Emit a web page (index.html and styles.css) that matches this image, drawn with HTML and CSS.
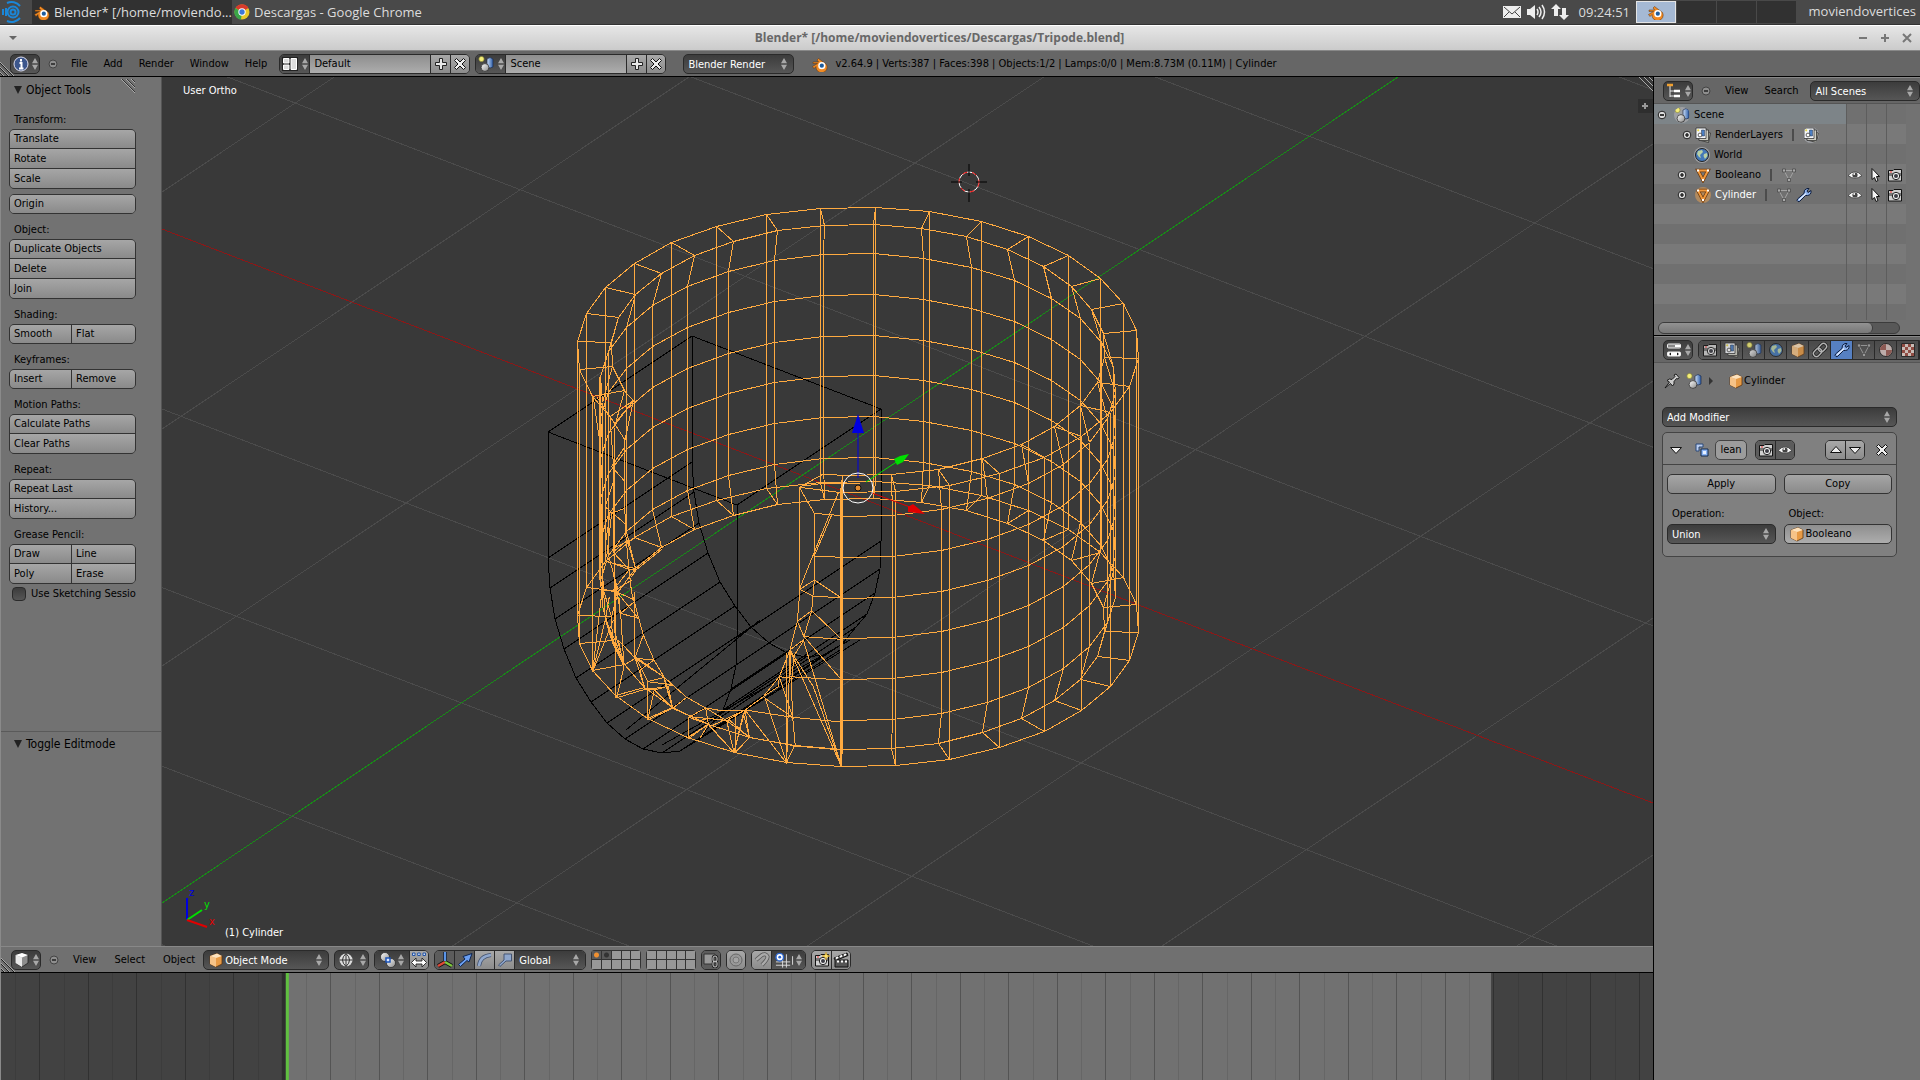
FILE: index.html
```html
<!DOCTYPE html>
<html lang="en">
<head>
<meta charset="utf-8">
<title>Blender* [/home/moviendovertices/Descargas/Tripode.blend]</title>
<link rel="stylesheet" href="styles.css">
</head>
<body>
<svg class="sprite" aria-hidden="true">
  <defs>
    <linearGradient id="ball" x1="0" y1="0" x2="1" y2="1"><stop offset="0" stop-color="#fff"/><stop offset="1" stop-color="#888"/></linearGradient>
    <linearGradient id="blueg" x1="0" y1="0" x2="1" y2="0"><stop offset="0" stop-color="#cfe0f7"/><stop offset="1" stop-color="#2b5ca8"/></linearGradient>
  </defs>
  <symbol id="arrows" viewBox="0 0 7 14"><path d="M0 6L3.500 0L7 6zM0 8L3.500 14L7 8z" fill="#a8a8a8"/></symbol>
  <symbol id="minus" viewBox="0 0 10 10"><circle cx="5" cy="5" r="4" fill="#8e8e8e" stroke="#444"/><path d="M3 5H7" stroke="#222" stroke-width="1.500"/></symbol>
  <symbol id="expand" viewBox="0 0 10 10"><circle cx="5" cy="5" r="3.800" fill="#ddd" stroke="#222"/><path d="M3 5H7M5 3V7" stroke="#000" stroke-width="1.200"/></symbol>
  <symbol id="collapse" viewBox="0 0 10 10"><circle cx="5" cy="5" r="3.800" fill="#ddd" stroke="#222"/><path d="M3 5H7" stroke="#000" stroke-width="1.500"/></symbol>
  <symbol id="blender" viewBox="0 0 16 16"><path d="M1 6H6.500L5 4L6.500 2.500L14.500 8.500A5.600 5.600 0 1 1 4 10.500L2 12.500L.5 10.500L5.500 7.500H1z" fill="#f08a24" stroke="#5a300c" stroke-width=".5"/><circle cx="9.800" cy="9.700" r="3.600" fill="#fff"/><circle cx="9.800" cy="9.700" r="2.100" fill="#1d5c9e"/></symbol>
  <symbol id="info" viewBox="0 0 16 16"><circle cx="8" cy="8" r="7" fill="#3c568c" stroke="#dde"/><path d="M8 3V5.500M6.500 7H8.500V12M6 12.500H10.500" stroke="#fff" stroke-width="2" fill="none"/></symbol>
  <symbol id="layout" viewBox="0 0 16 16"><path d="M0 1H16V15H0z" fill="#222"/><path d="M1.500 2.500H7V7H1.500zM1.500 9H7V13.500H1.500zM9 2.500H14.500V13.500H9z" fill="#ddd" stroke="#fff"/></symbol>
  <symbol id="scene" viewBox="0 0 16 16"><path d="M9 3Q12 0 15 3V11Q12 13 9 11z" fill="url(#blueg)" stroke="#1c2c4c" stroke-width=".7"/><circle cx="7" cy="11.500" r="3.900" fill="url(#ball)" stroke="#222" stroke-width=".7"/><circle cx="3.500" cy="3" r="2.600" fill="#f4ee7a" stroke="#8b8838" stroke-width=".7"/></symbol>
  <symbol id="plus" viewBox="0 0 16 16"><path d="M6.500 2.500H9.500V6.500H13.500V9.500H9.500V13.500H6.500V9.500H2.500V6.500H6.500z" fill="#e8e8e8" stroke="#222"/></symbol>
  <symbol id="cross" viewBox="0 0 16 16"><path d="M2.500 4.500L4.500 2.500L8 6L11.500 2.500L13.500 4.500L10 8L13.500 11.500L11.500 13.500L8 10L4.500 13.500L2.500 11.500L6 8z" fill="#eee" stroke="#111"/></symbol>
  <symbol id="cubeo" viewBox="0 0 16 16"><path d="M2 4L9 1.500L14 4V12L8 15L2 12z" fill="#e79a45" stroke="#5d3510" stroke-width=".8"/><path d="M2 4L8 6V15L2 12z" fill="#f6c388"/><path d="M2 4L9 1.500L14 4L8 6z" fill="#fde2bd"/></symbol>
  <symbol id="cubew" viewBox="0 0 16 16"><path d="M1.500 3L8 1L14 3V11L8 15L1.500 11z" fill="#8d8d8d" stroke="#222" stroke-width=".8"/><path d="M1.500 3L8 5.500V15L1.500 11z" fill="#e8e8e8"/><path d="M1.500 3L8 1L14 3L8 5.500z" fill="#fff"/></symbol>
  <symbol id="tree" viewBox="0 0 16 16"><path d="M4 3V14M4 8H9M4 13H9" stroke="#e8e8e8" fill="none"/><path d="M1 2H7" stroke="#f0a030" stroke-width="2.500"/><path d="M8 8H14M8 13H14" stroke="#fff" stroke-width="2.500"/></symbol>
  <symbol id="sliders" viewBox="0 0 16 16"><rect x="1.500" y="2" width="13" height="4" rx="1" fill="#888" stroke="#eee"/><path d="M9 3H14V5H9z" fill="#fff"/><rect x="1.500" y="10" width="13" height="4" rx="1" fill="#fff" stroke="#eee"/><path d="M3 12L5 10.500V13.500zM13 12L11 10.500V13.500z" fill="#111"/></symbol>
  <symbol id="layers" viewBox="0 0 16 16"><path d="M6 4L15.500 6L13.500 15.500L4 13z" fill="#a8a89a" stroke="#333" stroke-width=".8"/><path d="M4 3H13.500V13.500H4z" fill="#cfcfc4" stroke="#333" stroke-width=".8"/><path d="M1 1H11V11.500H1z" fill="#f4f6fa" stroke="#333" stroke-width=".8"/><path d="M6.500 3H9.500V9H6.500z" fill="#4b7fc4" stroke="#234" stroke-width=".5"/><circle cx="5" cy="8" r="1.900" fill="#fff" stroke="#222" stroke-width=".7"/><circle cx="3.200" cy="3.300" r="1.100" fill="#e8d848"/></symbol>
  <symbol id="world" viewBox="0 0 16 16"><circle cx="8" cy="8" r="6.500" fill="#4478b8" stroke="#222"/><path d="M4 4L8 3L9 5L6 8L7 11L5 10L3 7zM10 7L13 6L13.500 9L11 12L9.500 9z" fill="#b9d0a4"/></symbol>
  <symbol id="mesho" viewBox="0 0 16 16"><path d="M3 3.500H13L8 13z" fill="none" stroke="#6a3a10" stroke-width="3.500"/><path d="M3 3.500H13L8 13z" fill="none" stroke="#f29a3e" stroke-width="2"/><path d="M2 2.500H4V4.500H2zM12 2.500H14V4.500H12zM7 12H9V14H7z" fill="#fff"/></symbol>
  <symbol id="meshg" viewBox="0 0 16 16"><path d="M3 3.500H13L8 13z" fill="none" stroke="#a4a4a4"/><path d="M1.500 2H4.500V5H1.500zM11.500 2H14.500V5H11.500zM6.500 11.500H9.500V14.500H6.500z" fill="#aaa" stroke="#444" stroke-width=".7"/></symbol>
  <symbol id="wrench" viewBox="0 0 16 16"><path d="M2 14.500Q.5 14 1.500 12L8 6.500Q7.500 2.500 11 1.500L13 1.500L11 4L12 5.500L15 3.500Q15.500 8 11.500 8.500H9.500L4 14Q3 15 2 14.500z" fill="#8fb2ec" stroke="#0d1c3c"/><path d="M3 13L10 6.500" stroke="#e4eeff" stroke-width="1.200"/></symbol>
  <symbol id="eye" viewBox="0 0 16 16"><path d="M1 8.500Q8 1 15 8.500Q8 14 1 8.500z" fill="#f4f4f4" stroke="#333" stroke-width=".8"/><circle cx="8" cy="8" r="2.600" fill="#444"/><circle cx="7.200" cy="7" r=".9" fill="#fff"/></symbol>
  <symbol id="pointer" viewBox="0 0 16 16"><path d="M5 1.500V12.500L7.500 10.500L9 14.500L11 13.500L9.500 9.500H12.500z" fill="#f4f4f4" stroke="#111"/></symbol>
  <symbol id="camera" viewBox="0 0 16 16"><path d="M1.500 3.500H6L7 2.500H14.500V14H1.500z" fill="#d0d0d0" stroke="#111"/><path d="M2 6H14V9H2z" fill="#777"/><circle cx="9" cy="9" r="3.700" fill="#eee" stroke="#222"/><circle cx="9" cy="9" r="2" fill="#3c3c44"/><path d="M3 5H5" stroke="#e33"/></symbol>
  <symbol id="chain" viewBox="0 0 16 16"><g transform="rotate(-45 8 8)" fill="none"><rect x="0" y="5" width="9" height="6" rx="3" stroke="#111" stroke-width="3"/><rect x="7" y="5" width="9" height="6" rx="3" stroke="#111" stroke-width="3"/><rect x="0" y="5" width="9" height="6" rx="3" stroke="#ccc" stroke-width="1.500"/><rect x="7" y="5" width="9" height="6" rx="3" stroke="#ccc" stroke-width="1.500"/></g></symbol>
  <symbol id="material" viewBox="0 0 16 16"><circle cx="8" cy="8" r="6.500" fill="#d8c4c0" stroke="#222"/><path d="M8 8H14A6 6 0 0 1 8 14zM8 8H2A6 6 0 0 1 8 2z" fill="#9c5c54"/></symbol>
  <symbol id="texture" viewBox="0 0 16 16"><path d="M1.500 1.500H14.500V14.500H1.500z" fill="#e8d8d0" stroke="#222"/><path d="M2 2h3v3h-3zM8 2h3v3h-3zM5 5h3v3h-3zM11 5h3v3h-3zM2 8h3v3h-3zM8 8h3v3h-3zM5 11h3v3h-3zM11 11h3v3h-3z" fill="#a04c40"/></symbol>
  <symbol id="pin" viewBox="0 0 16 16"><path d="M1 15L5.500 9L3 7.500L5.500 6L8 6.500L11 3.500L10 2L12 1L15 4.500L14 6L12.500 5.500L10 8.500L10 11L8.500 13L6.500 10.500z" fill="#ccc" stroke="#111" stroke-width=".9"/></symbol>
  <symbol id="boolean" viewBox="0 0 16 16"><path d="M2 2H9V5H5V9H2z" fill="#b9cdf0" stroke="#2a4878"/><path d="M7 7H14V14H7z" fill="#8ab4f4" stroke="#10284c"/><path d="M9 9H12V12H9z" fill="#e6f0ff"/></symbol>
  <symbol id="tridown" viewBox="0 0 16 16"><path d="M2.500 5.500H13.500L8 11.500z" fill="#eee" stroke="#111"/></symbol>
  <symbol id="triup" viewBox="0 0 16 16"><path d="M2.500 10.500H13.500L8 4.500z" fill="#eee" stroke="#111"/></symbol>
  <symbol id="wireball" viewBox="0 0 16 16"><circle cx="8" cy="8" r="6.500" fill="#ddd"/><path d="M8 1.500V14.500M1.500 8H14.500M8 1.500Q1 8 8 14.500M8 1.500Q15 8 8 14.500" stroke="#333" fill="none"/></symbol>
  <symbol id="pivot" viewBox="0 0 16 16"><circle cx="5" cy="5" r="4.500" fill="url(#ball)" stroke="#111" stroke-width=".6"/><circle cx="11" cy="11" r="4.500" fill="url(#ball)" stroke="#111" stroke-width=".6"/><path d="M6 6H10V10H6z" fill="#dfe9ff" stroke="#1d54b8" stroke-width="1.500"/></symbol>
  <symbol id="centers" viewBox="0 0 16 16"><path d="M1.500 1H4V3.500H1.500zM6.700 1H9.200V3.500H6.700zM12 1H14.500V3.500H12z" fill="#cfe0ff" stroke="#2454a4"/><path d="M.5 10.500L5 6V9H11V6L15.500 10.500L11 15V12H5V15z" fill="#fff" stroke="#222" stroke-width=".9"/></symbol>
  <symbol id="axes" viewBox="0 0 16 16"><path d="M8 0V10L1 14M8 10L15 14" fill="none" stroke="#111" stroke-width="4"/><path d="M8 0V9" stroke="#5b95e8" stroke-width="2.500"/><path d="M8 10L1 14" stroke="#e04838" stroke-width="2.500"/><path d="M8 10L15 14" stroke="#7cc83c" stroke-width="2.500"/></symbol>
  <symbol id="move" viewBox="0 0 16 16"><path d="M1.500 12.500L8 7L6 4.500L15 1.500L12 10L10 8.500L3.500 14.500z" fill="#6a9ef0" stroke="#0d2450"/></symbol>
  <symbol id="rotate" viewBox="0 0 16 16"><path d="M2 14Q3 4 14 3" fill="none" stroke="#445472" stroke-width="4"/><path d="M2 14Q3 4 14 3" fill="none" stroke="#91a8cc" stroke-width="2.500"/></symbol>
  <symbol id="scale" viewBox="0 0 16 16"><path d="M1.500 13L7 8V2H14.500V9H9L3 14.500z" fill="#8ea6cc" stroke="#445472"/></symbol>
  <symbol id="lock" viewBox="0 0 16 16"><path d="M1 2H12V12H1z" fill="#999" stroke="#333"/><rect x="10" y="4" width="4" height="6" rx="2" fill="none" stroke="#222" stroke-width="2.500"/><rect x="10" y="9" width="4" height="6" rx="2" fill="none" stroke="#222" stroke-width="2.500"/><rect x="10" y="4" width="4" height="6" rx="2" fill="none" stroke="#ccc"/><rect x="10" y="9" width="4" height="6" rx="2" fill="none" stroke="#ccc"/></symbol>
  <symbol id="prop" viewBox="0 0 16 16"><circle cx="8" cy="8" r="6" fill="#999" stroke="#666"/><circle cx="8" cy="8" r="3" fill="#a4a4a4" stroke="#777"/></symbol>
  <symbol id="magnet" viewBox="0 0 16 16"><path d="M2 8L8 3Q12 1 13.500 4.500Q14 7 8 13" fill="none" stroke="#555" stroke-width="4"/><path d="M2 8L8 3Q12 1 13.500 4.500Q14 7 8 13" fill="none" stroke="#aaa" stroke-width="2.500"/></symbol>
  <symbol id="snap" viewBox="0 0 20 16"><path d="M1 10H16M1 13.500H16M8 4V16M12 2V16M18.500 4V13" stroke="#ddd" fill="none"/><circle cx="5" cy="5" r="4" fill="#fff" stroke="#2a64cc" stroke-width="1.500"/><circle cx="5" cy="5" r="1.500" fill="#2a64cc"/></symbol>
  <symbol id="clap" viewBox="0 0 16 16"><path d="M1 6L14 1L15 3.500L4 8H15V15H2V8z" fill="#555" stroke="#111"/><path d="M3 6.500L5 5M7 5L9 3.500M11 3.500L13 2M4 9.500H6M8 9.500H10M12 9.500H14" stroke="#fff" stroke-width="2"/></symbol>
  <symbol id="camstar" viewBox="0 0 16 16"><use href="#camera"/><path d="M12 0L13 3L16 4L13 5L12 8L11 5L8 4L11 3z" fill="#ffe56a" stroke="#c79018" stroke-width=".5"/></symbol>
  <symbol id="grip" viewBox="0 0 14 14"><path d="M0 0L14 14M5 0L14 9M10 0L14 4" stroke="#a8a8a8" fill="none"/><path d="M1 0L14 13M6 0L14 8M11 0L14 3" stroke="#333" fill="none"/></symbol>
  <symbol id="grip-low" viewBox="0 0 14 14"><path d="M0 0L14 14M0 5L9 14M0 10L4 14" stroke="#a8a8a8" fill="none"/><path d="M0 1L13 14M0 6L8 14M0 11L3 14" stroke="#222" fill="none"/></symbol>
</svg>

<div class="desktop-bar">
  <button class="launcher" aria-label="Menu"><svg viewBox="0 0 20 22"><g fill="none" stroke="#1b87d8" stroke-width="2"><circle cx="11" cy="11" r="2.500"/><circle cx="11" cy="11" r="5.500"/><path d="M5 2A11 11 0 0 1 18 5M5 20A11 11 0 0 0 18 17M1 8V14M4 7V15"/></g></svg></button>
  <button class="task task-active"><svg class="ic"><use href="#blender"/></svg><span>Blender* [/home/moviendo...</span></button>
  <button class="task"><svg class="ic" viewBox="0 0 16 16"><circle cx="8" cy="8" r="7.500" fill="#e8c828"/><path d="M8 8L1.500 4A7.500 7.500 0 0 1 14.500 4z" fill="#d83a2c"/><path d="M8 8L1.500 4A7.500 7.500 0 0 0 7 15.500z" fill="#3aa648"/><circle cx="8" cy="8" r="3.700" fill="#fff"/><circle cx="8" cy="8" r="2.700" fill="#3c78d8"/></svg><span>Descargas - Google Chrome</span></button>
  <div class="tray">
    <svg class="tray-ic" viewBox="0 0 20 16"><path d="M1 2H19V14H1z" fill="#eee"/><path d="M2 3L10 10L18 3M2 13L7 8M18 13L13 8" fill="none" stroke="#444"/></svg>
    <svg class="tray-ic" viewBox="0 0 20 16"><path d="M1 5H4L9 1V15L4 11H1z" fill="#eee"/><path d="M11 5Q13 8 11 11M13 3Q17 8 13 13M16 1Q21 8 16 15" fill="none" stroke="#eee" stroke-width="1.500"/></svg>
    <svg class="tray-ic" viewBox="0 0 20 16"><path d="M6 0L11 5H8V12H4V5H1zM14 16L9 11H12V4H16V11H19z" fill="#eee"/></svg>
    <span class="clock">09:24:51</span>
  </div>
  <div class="pager"><button class="on" aria-label="Workspace 1"><svg class="ic"><use href="#blender"/></svg></button><button aria-label="Workspace 2"></button><button aria-label="Workspace 3"></button><button aria-label="Workspace 4"></button></div>
  <span class="user">moviendovertices</span>
</div>

<div class="titlebar">
  <button aria-label="Window menu"><svg viewBox="0 0 10 10"><path d="M1 3H9L5 7z" fill="#666"/></svg></button>
  <h1>Blender* [/home/moviendovertices/Descargas/Tripode.blend]</h1>
  <div class="win-buttons">
    <button aria-label="Minimize"><svg viewBox="0 0 10 10"><path d="M1 5H9" stroke="#777" stroke-width="2"/></svg></button>
    <button aria-label="Maximize"><svg viewBox="0 0 10 10"><path d="M1 5H9M5 1V9" stroke="#777" stroke-width="2"/></svg></button>
    <button aria-label="Close"><svg viewBox="0 0 10 10"><path d="M1 1L9 9M9 1L1 9" stroke="#777" stroke-width="2"/></svg></button>
  </div>
</div>

<header class="hdr info-hdr">
  <svg class="grip low"><use href="#grip-low"/></svg>
  <button class="editor" aria-label="Editor type"><svg class="ic"><use href="#info"/></svg><svg class="ar"><use href="#arrows"/></svg></button>
  <button class="fold" aria-label="Collapse menus"><svg><use href="#minus"/></svg></button>
  <nav class="menu wide"><a href="#file">File</a><a href="#add">Add</a><a href="#render">Render</a><a href="#window">Window</a><a href="#help">Help</a></nav>
  <div class="group id-block"><button class="dark pick" aria-label="Browse layout"><svg class="ic"><use href="#layout"/></svg><svg class="ar"><use href="#arrows"/></svg></button><input aria-label="Layout" value="Default"><button class="sq" aria-label="Add layout"><svg class="ic"><use href="#plus"/></svg></button><button class="sq" aria-label="Delete layout"><svg class="ic"><use href="#cross"/></svg></button></div>
  <div class="group id-block"><button class="dark pick" aria-label="Browse scene"><svg class="ic"><use href="#scene"/></svg><svg class="ar"><use href="#arrows"/></svg></button><input aria-label="Scene" value="Scene"><button class="sq" aria-label="Add scene"><svg class="ic"><use href="#plus"/></svg></button><button class="sq" aria-label="Delete scene"><svg class="ic"><use href="#cross"/></svg></button></div>
  <div class="drop engine"><select aria-label="Render engine"><option>Blender Render</option></select><svg class="ar"><use href="#arrows"/></svg></div>
  <svg class="ic"><use href="#blender"/></svg>
  <p class="stats">v2.64.9 | Verts:387 | Faces:398 | Objects:1/2 | Lamps:0/0 | Mem:8.73M (0.11M) | Cylinder</p>
</header>

<div class="work">
  <main class="left">
    <div class="view3d">
      <aside class="tools">
        <svg class="grip shelf"><use href="#grip"/></svg>
        <section class="tool-top">
          <h2>Object Tools</h2>
          <h3>Transform:</h3>
          <div class="stack"><button>Translate</button><button>Rotate</button><button>Scale</button></div>
          <div class="stack"><button>Origin</button></div>
          <h3>Object:</h3>
          <div class="stack"><button>Duplicate Objects</button><button>Delete</button><button>Join</button></div>
          <h3>Shading:</h3>
          <div class="stack two"><button>Smooth</button><button>Flat</button></div>
          <h3>Keyframes:</h3>
          <div class="stack two"><button>Insert</button><button>Remove</button></div>
          <h3>Motion Paths:</h3>
          <div class="stack"><button>Calculate Paths</button><button>Clear Paths</button></div>
          <h3>Repeat:</h3>
          <div class="stack"><button>Repeat Last</button><button>History...</button></div>
          <h3>Grease Pencil:</h3>
          <div class="stack two last"><button>Draw</button><button>Line</button><button>Poly</button><button>Erase</button></div>
          <label class="check"><input type="checkbox"><span>Use Sketching Sessio</span></label>
        </section>
        <section class="tool-bottom"><h2>Toggle Editmode</h2></section>
      </aside>
      <div class="viewport">
        <svg class="scene3d" viewBox="162 77 1491 869" preserveAspectRatio="xMidYMid slice" role="img" aria-label="Wireframe view">
          <path id="grid" class="wire grid"/>
          <path class="wire axis-x" d="M162 229L1653 803"/>
          <path class="wire axis-y" d="M162 903L1398 77"/>
          <path id="cutter" class="wire cutter"/>
          <path id="mesh" class="wire mesh"/>
          <g transform="translate(530 180) scale(.333333)">
            <path class="wire mesh" d="M190 652L240 710L285 780V1000L288 1070L318 1170M285 635L310 662L285 780M310 662L240 710L200 650M310 662L255 730L240 710M190 652L210 790L216 1150L226 1320M210 590V1200M228 510V1130M240 710L250 850V1120M245 860L285 905M245 860L285 800M250 905L225 980L284 1030M245 1000L284 985M240 1000L225 1100M245 1000L230 1130M248 1105L314 1075M248 1115L297 1168L288 1070M250 1115L288 1085M235 1145L297 1168M297 1168L305 1240L313 1265L327 1318L340 1365L372 1440L403 1492L428 1515L470 1552L527 1584L580 1593L645 1590L700 1550L748 1490L780 1410L802 1324L810 1228"/>
            <path class="wire mesh" d="M318 1170L297 1168M318 1170L305 1190M318 1170L395 1108M257 1200V1554M270 1300V1260L250 1230L297 1170M250 1235L305 1200M215 1230L260 1235L325 1315L272 1300L282 1460L260 1554M272 1300L313 1265M260 1235L272 1300M250 1180L262 1240M314 1235V1435L340 1365M314 1260L258 1235M226 1320L188 1475L250 1320M188 1475L215 1240M226 1320L255 1380L282 1455L250 1395L226 1320L238 1250M228 1325L282 1460L265 1380M265 1380L316 1435L345 1528L330 1470L372 1440L316 1435L282 1455M316 1435L403 1492L353 1505L428 1515L373 1530L345 1528L415 1520L428 1585L403 1492L316 1430L353 1505V1620L373 1530L428 1585L470 1552M428 1585L353 1620M428 1585L403 1500M345 1528L258 1554M428 1585L535 1632L476 1612L527 1584L535 1632M476 1612V1676L535 1632L612 1718L590 1622L535 1615L515 1620M527 1584L590 1622L658 1672L645 1590L612 1718L640 1600L658 1672L600 1622L480 1610M535 1632L510 1675M616 1605V1718L658 1672M612 1718L540 1640L645 1590L590 1622M645 1590L770 1750L705 1555L788 1612L748 1490L745 1520L700 1550M645 1590L788 1612L796 1698M770 1420V1750L780 1410L788 1612M748 1490L788 1495"/>
            <path class="wire mesh" d="M780 1410L935 1762L820 1380L780 1410L850 1520L935 1762V920M802 1324L845 1292L853 1200L935 1254M802 1324L822 1370L845 1292L935 1378L822 1370L935 1500L780 1490M822 1380L790 1430L788 1490M810 1228L850 1248L935 1254M810 1228L853 1200V1000L808 922V1228L925 938M853 1128L935 1132M853 1128L905 1005M853 1000L935 1007M808 922L935 938M808 922L880 882L935 886M820 918L880 910L990 912M788 1612L935 1626M796 1698L935 1710M658 1672L796 1698"/>
          </g>
          <g class="gizmo">
            <path d="M858 478V430" stroke="#0000e0"/><path d="M852 433L858 414L864 433z" fill="#0000e0"/>
            <path d="M866 482L898 461" stroke="#00e000"/><path d="M894 459L900 456L909 454L903 462L897 465z" fill="#00e000"/>
            <path d="M872 493L910 507" stroke="#e00000"/><path d="M908 507L913 504L925 514L908 512z" fill="#e00000"/>
            <circle cx="858" cy="488" r="15" stroke="#fff" fill="none"/>
            <circle cx="858" cy="488" r="3" fill="#e08a30" stroke="#111"/>
          </g>
          <g class="cursor3d"><circle cx="969" cy="182" r="10" fill="none" stroke="#fff"/><circle cx="969" cy="182" r="10" fill="none" stroke="#f00000" stroke-dasharray="5 5"/><path d="M951 182H962M976 182H987M969 164V176M969 189V202" stroke="#000"/></g>
          <g class="mini-axes"><path d="M187 920V898" stroke="#0000e0"/><path d="M187 920L202 910" stroke="#00e000"/><path d="M187 920L207 927" stroke="#e00000"/><text x="189" y="896" fill="#0000e0">z</text><text x="204" y="908" fill="#00e000">y</text><text x="209" y="925" fill="#e00000">x</text></g>
          <text class="vtext" x="183" y="94">User Ortho</text>
          <text class="vtext" x="225" y="936">(1) Cylinder</text>
          <path d="M1638 99H1653V113H1638z" fill="#2e2e2e"/><path d="M1642 106H1648M1645 103V109" stroke="#999" stroke-width="2"/>
        </svg>
        <svg class="grip"><use href="#grip"/></svg>
      </div>
    </div>

    <div class="hdr view-hdr">
      <svg class="grip low"><use href="#grip-low"/></svg>
      <button class="editor" aria-label="Editor type"><svg class="ic"><use href="#cubew"/></svg><svg class="ar"><use href="#arrows"/></svg></button>
      <button class="fold" aria-label="Collapse menus"><svg><use href="#minus"/></svg></button>
      <nav class="menu"><a href="#view">View</a><a href="#select">Select</a><a href="#object">Object</a></nav>
      <div class="drop mode"><svg class="ic lead"><use href="#cubeo"/></svg><select aria-label="Mode"><option>Object Mode</option></select><svg class="ar"><use href="#arrows"/></svg></div>
      <button class="editor shade" aria-label="Viewport shading"><svg class="ic"><use href="#wireball"/></svg><svg class="ar"><use href="#arrows"/></svg></button>
      <div class="group"><button class="dark shade" aria-label="Pivot"><svg class="ic"><use href="#pivot"/></svg><svg class="ar"><use href="#arrows"/></svg></button><button class="sq" aria-label="Manipulate centers"><svg class="ic"><use href="#centers"/></svg></button></div>
      <div class="group"><button class="sq on" aria-label="Manipulator"><svg class="ic"><use href="#axes"/></svg></button><button class="sq on" aria-label="Translate"><svg class="ic"><use href="#move"/></svg></button><button class="sq" aria-label="Rotate"><svg class="ic"><use href="#rotate"/></svg></button><button class="sq" aria-label="Scale"><svg class="ic"><use href="#scale"/></svg></button><div class="drop orient"><select aria-label="Orientation"><option>Global</option></select><svg class="ar"><use href="#arrows"/></svg></div></div>
      <div class="cells" role="group" aria-label="Layers 1"><button class="act" aria-label="Layer 1"></button><button class="used" aria-label="Layer 2"></button><button aria-label="Layer 3"></button><button aria-label="Layer 4"></button><button aria-label="Layer 5"></button><button aria-label="Layer 11"></button><button aria-label="Layer 12"></button><button aria-label="Layer 13"></button><button aria-label="Layer 14"></button><button aria-label="Layer 15"></button></div>
      <div class="cells" role="group" aria-label="Layers 2"><button aria-label="Layer 6"></button><button aria-label="Layer 7"></button><button aria-label="Layer 8"></button><button aria-label="Layer 9"></button><button aria-label="Layer 10"></button><button aria-label="Layer 16"></button><button aria-label="Layer 17"></button><button aria-label="Layer 18"></button><button aria-label="Layer 19"></button><button aria-label="Layer 20"></button></div>
      <div class="group"><button class="sq on" aria-label="Lock to scene"><svg class="ic"><use href="#lock"/></svg></button></div>
      <div class="group"><button class="sq" aria-label="Proportional editing"><svg class="ic"><use href="#prop"/></svg></button></div>
      <div class="group"><button class="sq" aria-label="Snap"><svg class="ic"><use href="#magnet"/></svg></button><button class="dark shade" aria-label="Snap element"><svg class="ic snap"><use href="#snap"/></svg><svg class="ar"><use href="#arrows"/></svg></button></div>
      <div class="group"><button class="sq" aria-label="Render image"><svg class="ic"><use href="#camstar"/></svg></button><button class="sq" aria-label="Render animation"><svg class="ic"><use href="#clap"/></svg></button></div>
    </div>

    <div class="timeline"><svg viewBox="0 973 1653 107" preserveAspectRatio="none" role="img" aria-label="Timeline">
      <path d="M0 973H1653V1080H0z" fill="#424242"/><path d="M283 973H1491V1080H283z" fill="#717171"/>
      <path id="ticks-minor" class="wire" stroke="#000" stroke-opacity=".09"/><path id="ticks-major" class="wire" stroke="#000" stroke-opacity=".25"/>
      <path d="M281 973H285V1080H281z" fill="#2e2e2e"/><path d="M285 973H288V1080H285z" fill="#60c040"/>
    </svg></div>
  </main>

  <aside class="right">
    <div class="hdr out-hdr">
      <button class="editor" aria-label="Editor type"><svg class="ic"><use href="#tree"/></svg><svg class="ar"><use href="#arrows"/></svg></button>
      <button class="fold" aria-label="Collapse menus"><svg><use href="#minus"/></svg></button>
      <nav class="menu"><a href="#oview">View</a><a href="#search">Search</a></nav>
      <div class="drop scenes"><select aria-label="Display mode"><option>All Scenes</option></select><svg class="ar"><use href="#arrows"/></svg></div>
    </div>
    <div class="outliner">
      <ul>
        <li class="row sel"><svg class="tg"><use href="#collapse"/></svg><svg class="ic halo"><use href="#scene"/></svg><span class="name">Scene</span></li>
        <li class="row l2"><svg class="tg"><use href="#expand"/></svg><svg class="ic"><use href="#layers"/></svg><span class="name">RenderLayers</span><i></i><svg class="ic halo"><use href="#layers"/></svg></li>
        <li class="row leaf"><svg class="ic halo"><use href="#world"/></svg><span class="name">World</span></li>
        <li class="row l1"><svg class="tg"><use href="#expand"/></svg><svg class="ic"><use href="#mesho"/></svg><span class="name">Booleano</span><i></i><svg class="ic"><use href="#meshg"/></svg><span class="flags"><svg class="ic"><use href="#eye"/></svg><svg class="ic"><use href="#pointer"/></svg><svg class="ic"><use href="#camera"/></svg></span></li>
        <li class="row l1 active"><svg class="tg"><use href="#expand"/></svg><svg class="ic glow"><use href="#mesho"/></svg><span class="name">Cylinder</span><i></i><svg class="ic"><use href="#meshg"/></svg><svg class="ic"><use href="#wrench"/></svg><span class="flags"><svg class="ic"><use href="#eye"/></svg><svg class="ic"><use href="#pointer"/></svg><svg class="ic"><use href="#camera"/></svg></span></li>
      </ul>
      <div class="scroll"><div></div></div>
    </div>

    <div class="hdr prop-hdr">
      <button class="editor" aria-label="Editor type"><svg class="ic"><use href="#sliders"/></svg><svg class="ar"><use href="#arrows"/></svg></button>
      <div class="tabs"><button aria-label="Render"><svg class="ic"><use href="#camera"/></svg></button><button aria-label="Render layers"><svg class="ic"><use href="#layers"/></svg></button><button aria-label="Scene"><svg class="ic"><use href="#scene"/></svg></button><button aria-label="World"><svg class="ic"><use href="#world"/></svg></button><button aria-label="Object"><svg class="ic"><use href="#cubeo"/></svg></button><button aria-label="Constraints"><svg class="ic"><use href="#chain"/></svg></button><button class="cur" aria-label="Modifiers"><svg class="ic"><use href="#wrench"/></svg></button><button aria-label="Data"><svg class="ic"><use href="#meshg"/></svg></button><button aria-label="Material"><svg class="ic"><use href="#material"/></svg></button><button aria-label="Texture"><svg class="ic"><use href="#texture"/></svg></button></div>
    </div>
    <div class="props">
      <div class="crumbs"><button class="bare" aria-label="Pin"><svg class="ic"><use href="#pin"/></svg></button><svg class="ic"><use href="#scene"/></svg><svg class="chev" viewBox="0 0 6 8"><path d="M1 0L5 4L1 8z" fill="#333"/></svg><svg class="ic cube"><use href="#cubeo"/></svg><span>Cylinder</span></div>
      <div class="drop"><select aria-label="Add Modifier"><option>Add Modifier</option></select><svg class="ar"><use href="#arrows"/></svg></div>
      <section class="modifier">
        <div class="mod-head">
          <button class="bare" aria-label="Collapse"><svg class="ic"><use href="#tridown"/></svg></button>
          <svg class="ic mod-ic"><use href="#boolean"/></svg>
          <input class="mod-name" aria-label="Modifier name" value="lean">
          <div class="group vis"><button class="sq on" aria-label="Use in render"><svg class="ic"><use href="#camera"/></svg></button><button class="sq on" aria-label="Show in viewport"><svg class="ic"><use href="#eye"/></svg></button></div>
          <div class="group"><button class="sq" aria-label="Move up"><svg class="ic"><use href="#triup"/></svg></button><button class="sq" aria-label="Move down"><svg class="ic"><use href="#tridown"/></svg></button></div>
          <button class="bare close" aria-label="Remove"><svg class="ic"><use href="#cross"/></svg></button>
        </div>
        <div class="mod-body">
          <button class="push">Apply</button><button class="push">Copy</button>
          <label for="op">Operation:</label><label for="ob">Object:</label>
          <div class="drop"><select id="op"><option>Union</option></select><svg class="ar"><use href="#arrows"/></svg></div>
          <div class="obj"><svg class="ic lead"><use href="#cubeo"/></svg><input id="ob" value="Booleano"></div>
        </div>
      </section>
    </div>
  </aside>
</div>
<script src="scene.js"></script>
</body>
</html>
```
FILE: styles.css
```css
* { box-sizing: border-box; }
body { margin: 0; height: 100vh; min-height: 800px; display: flex; flex-direction: column; overflow: hidden; background: #727272; color: #000; font: 11px/20px "DejaVu Sans Condensed", "DejaVu Sans", sans-serif; font-stretch: condensed; }
button, input, select { font: inherit; color: inherit; margin: 0; padding: 0; border: 0; background: none; }
h1, h2, h3, p, ul { margin: 0; padding: 0; font-weight: normal; list-style: none; }
a { color: inherit; text-decoration: none; }
svg { display: block; flex: none; }
.sprite { position: absolute; width: 0; height: 0; }
.ic { width: 16px; height: 16px; }
.ar { width: 6px; height: 14px; }

/* corner handles that split an area */
.grip { position: absolute; top: 0; right: 0; width: 14px; height: 14px; }
.grip.low { top: auto; right: auto; left: 0; bottom: 0; }
.grip.shelf { top: 2px; right: 26px; }

/* desktop panel */
.desktop-bar { flex: none; height: 25px; display: flex; align-items: stretch; background: #494949; border-bottom: 1px solid #333; color: #dcdcdc; font: 13px/22px "Open Sans", "Noto Sans", sans-serif; }
.launcher { width: 32px; padding: 1px 8px 1px 2px; }
.launcher svg { width: 20px; height: 22px; }
.task { display: flex; align-items: center; gap: 4px; padding: 0 2px; }
.task-active { width: 200px; background: #313131; white-space: nowrap; }
.tray { margin-left: auto; display: flex; align-items: center; gap: 4px; }
.tray-ic { width: 20px; height: 16px; }
.clock { width: 62px; padding-left: 5px; }
.pager { display: flex; gap: 1px; padding: 1px 0; width: 160px; }
.pager button { flex: 1; background: #313131; display: grid; place-items: center; }
.pager .on { background: #a5b9d4; border: 1px solid #e4e4e4; }
.user { padding: 0 4px 0 13px; }

.titlebar { flex: none; height: 25px; display: flex; align-items: center; padding: 0 8px; background: linear-gradient(#e6e6e6, #cbcbcb); border-top: 1px solid #fff; color: #686868; }
.titlebar svg { width: 10px; height: 10px; }
.titlebar h1 { flex: 1; text-align: center; font: bold 12px/24px "Open Sans", "Noto Sans", sans-serif; padding-left: 3px; }
.win-buttons { display: flex; gap: 12px; }

/* editor headers */
.hdr { position: relative; flex: none; display: flex; align-items: center; height: 27px; padding-left: 10px; background: #666; border-top: 1px solid #888; border-bottom: 1px solid #000; }
.view-hdr { background: #707070; }
.editor, .dark, .drop { background: linear-gradient(#3c3c3c, #565656); }
.editor { height: 20px; width: 30px; border: 1px solid #2a2a2a; border-radius: 5px; display: flex; align-items: center; justify-content: center; gap: 3px; }
.fold { width: 10px; margin: 0 13px 0 8px; }
.fold svg { width: 10px; height: 10px; }
.menu { display: flex; gap: 16px; }
.group { display: flex; height: 20px; border: 1px solid #2a2a2a; border-radius: 5px; overflow: hidden; }
.group > * + * { border-left: 1px solid #2a2a2a; }
.group input { background: linear-gradient(#8e8e8e, #adadad); padding: 0 4px; }
.dark { display: flex; align-items: center; justify-content: center; gap: 4px; }
.pick { width: 29px; }
.shade { width: 34px; gap: 6px; }
.sq { width: 20px; display: grid; place-items: center; background: linear-gradient(#a8a8a8, #8c8c8c); }
.sq:first-child, .sq:last-child { width: 19px; }
.sq:only-child { width: 18px; }
.sq.on { background: #5c5c5c; }
.drop { position: relative; height: 20px; border: 1px solid #2a2a2a; border-radius: 5px; color: #fff; display: flex; }
.drop select { appearance: none; flex: 1; min-width: 0; padding: 0 18px 1px 4px; outline: 0; }
.drop .ar { position: absolute; right: 6px; top: 2px; pointer-events: none; }
.lead { margin: 1px 0 0 4px; }
.lead + select { padding-left: 1px; }

.info-hdr .id-block { margin-left: 5px; }
.info-hdr .menu { margin-right: 7px; }
.id-block input { width: 121px; }
.engine { width: 111px; margin: 0 18px 0 17px; }
.stats { margin-left: 7px; white-space: nowrap; }

.work { flex: 1; min-height: 0; display: grid; grid-template-columns: minmax(0, 1fr) 267px; }
.left { display: flex; flex-direction: column; min-height: 0; border-left: 1px solid #8a8a8a; }
.view3d { flex: 1; min-height: 0; display: flex; }

/* tool shelf */
.tools { position: relative; width: 161px; background: #727272; border-right: 1px solid #555; flex: none; display: flex; flex-direction: column; overflow: hidden; }
.tool-top { flex: 1; padding: 3px 25px 0 8px; }
.tools h2 { font-size: 12px; line-height: 20px; padding-left: 17px; position: relative; }
.tools h2::before { content: ""; position: absolute; left: 5px; top: 6px; border: 4px solid transparent; border-top: 8px solid #222; border-bottom: 0; }
.tool-top h2 { margin-bottom: 9px; }
.tools h3 { font-size: 11px; line-height: 18px; padding: 2px 0 0 5px; }
.stack { display: grid; grid-template-rows: 18px; grid-auto-rows: 19px; gap: 1px; background: #333; border: 1px solid #333; border-radius: 5px; overflow: hidden; margin-bottom: 5px; }
.stack.two { grid-template-columns: 61px 1fr; }
.stack.last { margin-bottom: 0; }
.stack button { padding-left: 4px; text-align: left; background: linear-gradient(#a6a6a6, #8a8a8a); line-height: 18px; }
.check { display: flex; align-items: center; gap: 5px; padding-left: 3px; white-space: nowrap; overflow: hidden; }
.check input { appearance: none; flex: none; width: 14px; height: 14px; border-radius: 4px; border: 1px solid #2a2a2a; background: linear-gradient(#3c3c3c, #565656); }
.tool-bottom { flex: none; height: 215px; border-top: 1px solid #5a5a5a; padding: 2px 8px; }

.viewport { position: relative; flex: 1; min-width: 0; background: #393939; }
.scene3d { width: 100%; height: 100%; }
.wire { fill: none; shape-rendering: crispEdges; stroke-width: 1px; vector-effect: non-scaling-stroke; }
.grid { stroke: #4b4b4b; }
.axis-x { stroke: #8a1818; }
.axis-y { stroke: #188a18; }
.cutter { stroke: #000; }
.mesh { stroke: #ffaa40; }
.gizmo, .cursor3d { stroke-width: 1px; }
.mini-axes path { stroke-width: 2px; }
.vtext { fill: #fff; }

/* object header widths */
.view-hdr { gap: 5px; }
.view-hdr .fold { margin: 0 9px 0 3px; }
.view-hdr .menu { margin-right: 3px; gap: 18px; }
.mode { width: 126px; }
.view-hdr .editor.shade { width: 35px; }
.orient { width: 71px; height: 18px; border-width: 0 0 0 1px; border-radius: 0; }
.orient .ar { top: 2px; }
.cells { display: grid; grid-template-columns: repeat(5, 1fr); grid-template-rows: 1fr 1fr; gap: 1px; width: 50px; padding: 1px; background: #333; border-radius: 4px; overflow: hidden; height: 20px; }
.cells button { background: #989898; }
.cells .act, .cells .used { background: radial-gradient(circle, #333 2px, #5a5a5a 3px); }
.cells .act { background: radial-gradient(circle, #f09030 2px, #5a5a5a 3px); }
.snap { width: 19px; }
.group .shade { gap: 2px; }

.timeline { flex: none; height: 107px; }
.timeline svg { width: 100%; height: 100%; }

/* outliner */
.right { display: flex; flex-direction: column; min-height: 0; background: #727272; border-left: 1px solid #000; overflow: hidden; }
.right .hdr { padding-left: 9px; border-bottom-color: #555; }
.right .fold { margin-right: 14px; }
.scenes { flex: 1; margin-left: 12px; }
.outliner { flex: none; height: 232px; position: relative; border-bottom: 1px solid #000; background: linear-gradient(#5d5d5d, #5d5d5d) 192px 0 / 1px 216px no-repeat, linear-gradient(#5d5d5d, #5d5d5d) 212px 0 / 1px 216px no-repeat, linear-gradient(#5d5d5d, #5d5d5d) 232px 0 / 1px 216px no-repeat, repeating-linear-gradient(#707070 0 20px, #797979 20px 40px) 0 0 / 252px 216px no-repeat; }
.row { display: flex; align-items: center; height: 20px; width: 252px; padding: 1px 0 0 3px; }
.row .name { margin-left: 4px; padding-top: 1px; }
.row.sel { width: 192px; background: #7d8488; }
.row .tg { width: 10px; height: 10px; margin-right: 7px; }
.row.l2 { padding-left: 28px; }
.row.l2 .tg { margin-right: 3px; }
.row.leaf { padding-left: 40px; }
.row.l1 { padding-left: 23px; }
.row.l1 .tg { margin-right: 8px; }
.row i { width: 2px; height: 12px; background: #4c4c4c; margin: 0 9px; }
.row .ic + .ic { margin-left: 4px; }
.halo { border-radius: 8px; background: #9ea0a4; }
.glow { border-radius: 8px; background: #b08a60; }
.active .name { color: #fff; }
.flags { margin-left: auto; display: flex; padding-right: 3px; }
.scroll { position: absolute; left: 4px; bottom: 1px; width: 242px; height: 12px; border: 1px solid #3c3c3c; border-radius: 6px; background: #585858; }
.scroll div { width: 214px; height: 10px; border-radius: 5px; background: linear-gradient(#929292, #787878); border-right: 1px solid #3c3c3c; }

/* properties */
.tabs { display: flex; margin-left: 5px; height: 20px; border: 1px solid #2a2a2a; border-radius: 5px 0 0 5px; overflow: hidden; }
.tabs button { flex: none; width: 22px; display: grid; place-items: center; background: linear-gradient(#4a4a4a, #5a5a5a); border-right: 1px solid #2a2a2a; }
.tabs .ic { opacity: .8; }
.tabs button.cur { background: #5680c2; }
.tabs .cur .ic { opacity: 1; }
.props { padding: 0 23px 0 8px; }
.crumbs { display: flex; align-items: center; gap: 6px; height: 36px; padding-left: 2px; margin-bottom: 8px; }
.chev { width: 6px; height: 8px; }
.crumbs .cube { margin-left: 8px; }
.crumbs span { margin-left: -6px; }
.bare { display: grid; place-items: center; }
.modifier { margin-top: 5px; border: 1px solid #444; border-radius: 5px; background: #808080; }
.mod-head { display: flex; align-items: center; height: 32px; padding: 2px 6px 0 5px; border-bottom: 1px solid #444; }
.mod-ic { margin: 0 5px 0 10px; }
.mod-name { width: 32px; height: 20px; border: 1px solid #444; border-radius: 5px; background: #9c9c9c; text-align: center; }
.vis { margin-left: 8px; margin-right: auto; }
.vis + .group { margin-right: 9px; }
.mod-body { display: grid; grid-template-columns: minmax(0, 1fr) minmax(0, 1fr); column-gap: 8px; padding: 9px 4px 12px; }
.push { height: 20px; border: 1px solid #333; border-radius: 5px; background: linear-gradient(#a6a6a6, #8a8a8a); line-height: 18px; }
.mod-body label { padding: 10px 0 0 5px; }
.obj { display: flex; height: 20px; border: 1px solid #333; border-radius: 5px; background: linear-gradient(#8e8e8e, #adadad); }
.obj input { flex: 1; min-width: 0; padding-left: 1px; }
```
FILE: scene.js
```js
// Builds the wireframe of the ring, the cutter prism, the floor grid and the timeline ticks.
(function () {
  var set = function (id, d) { document.getElementById(id).setAttribute('d', d); };
  var line = function (a, b) { return 'M' + a.join(' ') + 'L' + b.join(' '); };

  var grid = '', y;
  for (y = -484; y < 950; y += 178.6) if (Math.abs(y - 230) > 3) grid += line([162, y], [1653, y + 574]);
  for (y = 192; y < 1900; y += 237) if (y !== 903) grid += line([162, y], [1653, y - 996]);
  set('grid', grid);

  // ring: k counts 32 segments, r is the radius factor, h the height above the centre
  function pt(k, r, h) {
    var t = (3.53 + 11.25 * k) * Math.PI / 180;
    return [Math.floor(858 + 281 * r * Math.sin(t)) + .5, Math.floor(487 - h - 143 * r * Math.cos(t)) + .5];
  }
  function arc(from, to, r, h) {
    var d = '';
    for (var k = from; k < to; k++) d += line(pt(k, r, h), pt(k + 1, r, h));
    return d;
  }
  var IN = .88, WALL = .918, TOP = 137, m = '';
  m += arc(-10, 16, 1, TOP) + arc(-10, 16, IN, TOP);
  m += arc(0, 32, 1, -TOP) + arc(0, 32, IN, -TOP);
  [102, 61, 20, -20, -61, -102].forEach(function (h) { m += arc(-9, 16, WALL, h); });
  for (var k = -10; k <= 16; k++) {
    m += line(pt(k, 1, TOP), pt(k, 1, -TOP)) + line(pt(k, 1, TOP), pt(k, IN, TOP));
    m += line(pt(k, IN, TOP), pt(k, WALL, 102)) + line(pt(k, WALL, 102), pt(k, WALL, -102));
    m += line(pt(k, WALL, -102), pt(k, IN, -TOP));
  }
  for (k = 0; k < 32; k++) m += line(pt(k, 1, -TOP), pt(k, IN, -TOP));
  set('mesh', m);

  // cutter: a U profile swept along one direction
  var u = [[548, 432], [548, 558], [550, 588], [555, 619], [564, 649], [576, 678], [591, 702], [607, 723], [625, 739],
    [643, 749], [662, 753], [680, 751], [698, 740], [712, 723], [723, 710], [731, 689], [736, 665], [737, 637], [737, 505]];
  var far = function (p) { return [p[0] + 144, p[1] - 96]; };
  var c = '';
  u.forEach(function (p, i) {
    var q = u[(i + 1) % u.length];
    c += line(p, q) + line(far(p), far(q)) + line(p, far(p));
  });
  c += 'M626 730L760 620M662 745L850 640M680 751L860 640M698 740L840 650';
  set('cutter', c);

  var major = '', minor = '';
  for (var n = 0; n < 34; n++) {
    major += 'M' + (38.5 + Math.round(n * 48.5)) + ' 973V1080';
    minor += 'M' + (14.5 + Math.round(n * 48.5)) + ' 973V1080';
  }
  set('ticks-major', major);
  set('ticks-minor', minor);
})();
```
